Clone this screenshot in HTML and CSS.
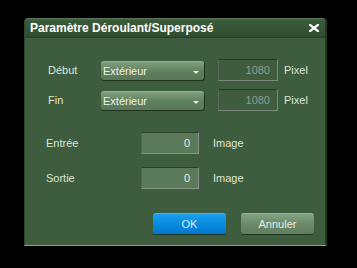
FILE: index.html
```html
<!DOCTYPE html>
<html>
<head>
<meta charset="utf-8">
<link rel="stylesheet" href="styles.css">
</head>
<body>
<div class="dialog">
  <div class="titlebar">
    <span class="title">Paramètre Déroulant/Superposé</span>
    <svg class="close" width="10" height="8" viewBox="0 0 10 8"><path d="M1 0.8 L9 7.2 M9 0.8 L1 7.2" stroke="#fff" stroke-width="2.2" stroke-linecap="square"/></svg>
  </div>
  <div class="content">
    <div class="row r1">
      <span class="label">Début</span>
      <div class="select"><span>Extérieur</span><i class="arrow"></i></div>
      <div class="num disabled">1080</div>
      <span class="unit">Pixel</span>
    </div>
    <div class="row r2">
      <span class="label">Fin</span>
      <div class="select"><span>Extérieur</span><i class="arrow"></i></div>
      <div class="num disabled">1080</div>
      <span class="unit">Pixel</span>
    </div>
    <div class="row r3">
      <span class="label2">Entrée</span>
      <div class="num field">0</div>
      <span class="unit2">Image</span>
    </div>
    <div class="row r4">
      <span class="label2">Sortie</span>
      <div class="num field">0</div>
      <span class="unit2">Image</span>
    </div>
    <div class="buttons">
      <div class="btn ok">OK</div>
      <div class="btn cancel">Annuler</div>
    </div>
  </div>
</div>
</body>
</html>
```
FILE: styles.css
```css
html, body {
  margin: 0;
  padding: 0;
  background: #000;
}
body {
  padding: 18px 0 0 24px;
  font-family: "Liberation Sans", Arial, sans-serif;
  font-size: 11px;
  color: #dde6d6;
}
.dialog {
  width: 303px;
  height: 228px;
  box-sizing: border-box;
  background: #3e5c3e;
  border-radius: 4px 4px 0 0;
  border-right: 2px solid #22381f;
  border-bottom: 1px solid #86a486;
  border-left: 1px solid #2c472c;
  display: flex;
  flex-direction: column;
}
.titlebar {
  height: 20px;
  box-sizing: border-box;
  background: linear-gradient(#5d7d5d 0, #3b5a3b 2px, #365436 60%, #2f4b2f 100%);
  border-bottom: 1px solid #263f26;
  border-radius: 4px 4px 0 0;
  display: flex;
  align-items: center;
  justify-content: space-between;
  padding: 0 6px 0 5px;
}
.title {
  font-weight: bold;
  font-size: 12px;
  color: #fff;
}
.close {
  display: block;
  margin-top: 1px;
}
.content {
  flex: 1;
  display: flex;
  flex-direction: column;
  padding-top: 21px;
}
.row {
  display: flex;
  align-items: center;
  height: 22px;
}
.r2 { margin-top: 8px; }
.r3 { margin-top: 21px; }
.r4 { margin-top: 13px; }
.label {
  width: 53px;
  padding-left: 23px;
}
.label2 {
  width: 95px;
  padding-left: 21px;
}
.select {
  width: 103px;
  height: 19px;
  box-sizing: border-box;
  border-radius: 3px;
  background: linear-gradient(#7f9f7f, #5e7e5e 55%, #587858);
  box-shadow: 0 1px 0 #1f331f, 1px 1px 0 #1f331f;
  border-top: 1px solid #94b094;
  display: flex;
  align-items: center;
  justify-content: space-between;
  padding: 0 5px 0 2px;
  color: #eef2ea;
}
.arrow {
  width: 0;
  height: 0;
  border-left: 3.5px solid transparent;
  border-right: 3.5px solid transparent;
  border-top: 3.5px solid #e4ece0;
  margin-top: 3px;
}
.num {
  box-sizing: border-box;
  height: 22px;
  text-align: right;
  line-height: 20px;
}
.disabled {
  width: 60px;
  margin-left: 14px;
  border: 1px solid #7c8a7c;
  border-top-color: #253a25;
  border-left-color: #5a665a;
  padding-right: 7px;
  color: #8e9e8e;
  background: #3f5c3f;
}
.field {
  width: 58px;
  border: 1px solid #8a968a;
  border-top-color: #2a3f2a;
  border-left-color: #566656;
  padding-right: 8px;
  background: #5a7a5a;
  color: #e8eee4;
}
.unit { margin-left: 6px; }
.unit2 { margin-left: 14px; }
.buttons {
  display: flex;
  justify-content: flex-end;
  gap: 15px;
  margin-top: 24px;
  padding-right: 11px;
}
.btn {
  width: 73px;
  height: 21px;
  box-sizing: border-box;
  border-radius: 3px;
  display: flex;
  align-items: center;
  justify-content: center;
  font-size: 11px;
}
.ok {
  background: linear-gradient(#1aa0ee, #0a8ae0 50%, #0078cc);
  border-top: 1px solid #44b4f4;
  box-shadow: 0 1px 0 #1d331d;
  color: #dceefa;
}
.cancel {
  background: linear-gradient(#82a282, #6a8a6a 50%, #5e7e5e);
  border-top: 1px solid #9ab69a;
  box-shadow: 0 1px 0 #1d331d;
  color: #e6ece2;
}
```
